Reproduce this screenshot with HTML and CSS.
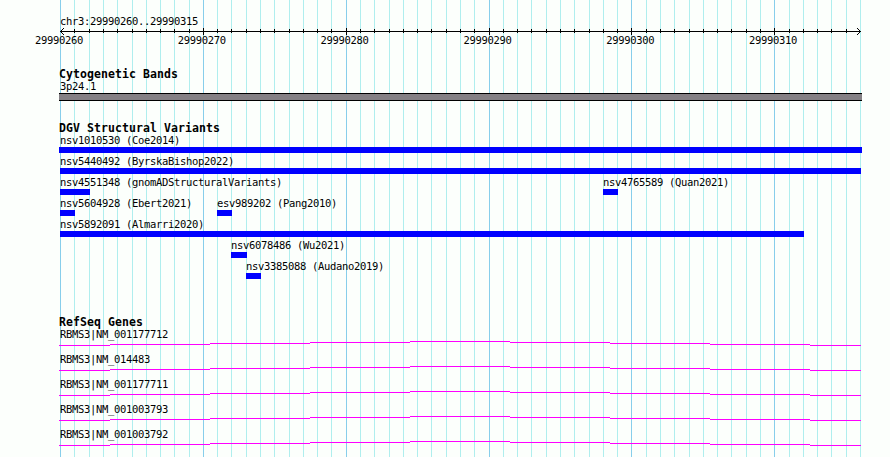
FILE: index.html
```html
<!DOCTYPE html>
<html lang="en">
<head>
    <meta charset="UTF-8">
    <meta name="viewport" content="width=device-width, initial-scale=1.0">
    <title>chr3:29990260..29990315</title>
    <link rel="stylesheet" href="styles.css">
</head>
<body>
    <div class="browser">
        <!-- Vertical grid, one line per base -->
        <svg class="grid" width="890" height="457" shape-rendering="crispEdges">
            <g id="grid-lines"></g>
        </svg>

        <!-- Ruler -->
        <div class="ruler">
            <div class="label">chr3:29990260..29990315</div>
            <svg class="axis" width="890" height="9" shape-rendering="crispEdges">
                <rect x="60" y="4" width="801" height="1"/>
                <g id="ticks"></g>
                <path d="M61 3h1v1h-1zM62 2h1v1h-1zM63 1h1v1h-1zM61 5h1v1h-1zM62 6h1v1h-1zM63 7h1v1h-1z"/>
                <path d="M859 3h1v1h-1zM858 2h1v1h-1zM857 1h1v1h-1zM859 5h1v1h-1zM858 6h1v1h-1zM857 7h1v1h-1z"/>
            </svg>
            <div class="positions">
                <span>29990260</span>
                <span>29990270</span>
                <span>29990280</span>
                <span>29990290</span>
                <span>29990300</span>
                <span>29990310</span>
            </div>
        </div>

        <!-- Cytogenetic bands -->
        <div class="track cyto">
            <h2>Cytogenetic Bands</h2>
            <div class="label">3p24.1</div>
            <div class="band"></div>
        </div>

        <!-- Structural variants -->
        <div class="track variants">
            <h2>DGV Structural Variants</h2>
            <div class="row">
                <div class="feature first"><div class="label">nsv1010530 (Coe2014)</div><div class="bar full" style="width: 803px"></div></div>
            </div>
            <div class="row">
                <div class="feature first"><div class="label">nsv5440492 (ByrskaBishop2022)</div><div class="bar" style="width: 801px"></div></div>
            </div>
            <div class="row">
                <div class="feature first"><div class="label">nsv4551348 (gnomADStructuralVariants)</div><div class="bar" style="width: 30px"></div></div>
                <div class="feature" style="margin-left: 543px"><div class="label">nsv4765589 (Quan2021)</div><div class="bar" style="width: 15px"></div></div>
            </div>
            <div class="row">
                <div class="feature first"><div class="label">nsv5604928 (Ebert2021)</div><div class="bar" style="width: 15px"></div></div>
                <div class="feature" style="margin-left: 157px"><div class="label">esv989202 (Pang2010)</div><div class="bar" style="width: 15px"></div></div>
            </div>
            <div class="row">
                <div class="feature first"><div class="label">nsv5892091 (Almarri2020)</div><div class="bar" style="width: 744px"></div></div>
            </div>
            <div class="row">
                <div class="feature" style="margin-left: 171px"><div class="label">nsv6078486 (Wu2021)</div><div class="bar" style="width: 16px"></div></div>
            </div>
            <div class="row">
                <div class="feature" style="margin-left: 186px"><div class="label">nsv3385088 (Audano2019)</div><div class="bar" style="width: 15px"></div></div>
            </div>
        </div>

        <!-- Genes -->
        <div class="track genes">
            <h2>RefSeq Genes</h2>
            <div class="gene">
                <div class="label">RBMS3|NM_001177712</div>
                <svg class="intron" width="802" height="5" shape-rendering="crispEdges">
                    <path id="intron" d="M0 4H51V5H0zM51 3H151V4H51zM151 2H251V3H151zM251 1H351V2H251zM351 0H451V1H351zM451 1H551V2H451zM551 2H651V3H551zM651 3H751V4H651zM751 4H802V5H751z"/>
                </svg>
            </div>
            <div class="gene">
                <div class="label">RBMS3|NM_014483</div>
                <svg class="intron" width="802" height="5" shape-rendering="crispEdges"><use href="#intron"/></svg>
            </div>
            <div class="gene">
                <div class="label">RBMS3|NM_001177711</div>
                <svg class="intron" width="802" height="5" shape-rendering="crispEdges"><use href="#intron"/></svg>
            </div>
            <div class="gene">
                <div class="label">RBMS3|NM_001003793</div>
                <svg class="intron" width="802" height="5" shape-rendering="crispEdges"><use href="#intron"/></svg>
            </div>
            <div class="gene">
                <div class="label">RBMS3|NM_001003792</div>
                <svg class="intron" width="802" height="5" shape-rendering="crispEdges"><use href="#intron"/></svg>
            </div>
        </div>
    </div>

    <script>
        const bases = [
            60, 74, 89, 103, 117, 132, 146, 160, 174, 189,
            203, 217, 231, 246, 260, 274, 289, 303, 317, 331,
            346, 360, 374, 389, 403, 417, 431, 446, 460, 474,
            489, 503, 517, 531, 546, 560, 574, 589, 603, 617,
            631, 646, 660, 674, 689, 703, 717, 731, 746, 760,
            774, 789, 803, 817, 831, 846, 860
        ];

        function addLine(parent, x, y, height, className) {
            const rect = document.createElementNS("http://www.w3.org/2000/svg", "rect");
            rect.setAttribute("x", x);
            rect.setAttribute("y", y);
            rect.setAttribute("width", 1);
            rect.setAttribute("height", height);
            rect.setAttribute("class", className);
            parent.appendChild(rect);
        }

        const grid = document.getElementById("grid-lines");
        const ticks = document.getElementById("ticks");

        bases.forEach((x, i) => {
            const major = i % 10 === 0;
            addLine(grid, x, 0, 457, major ? "major" : "minor");

            // No ticks under the arrow heads
            if (i > 0 && i < bases.length - 1) {
                addLine(ticks, x, major ? 1 : 2, major ? 7 : 4, "tick");
            }
        });
    </script>
</body>
</html>
```
FILE: styles.css
```css
body {
    margin: 0;
    background-color: #fcfffc;
    color: #000;
    font-family: "DejaVu Sans Mono", monospace;
}

.browser {
    position: relative;
    width: 890px;
    height: 457px;
    overflow: hidden;
}

.grid {
    position: absolute;
    top: 0;
    left: 0;
    z-index: -1;
}

.minor {
    fill: #afeeee;
}

.major {
    fill: #87ceeb;
}

.label,
.positions {
    height: 12px;
    font-size: 10.5px;
    line-height: 12px;
    letter-spacing: -0.32px;
    white-space: nowrap;
}

h2 {
    margin: 0 0 0 -1px;
    height: 12px;
    font-size: 11.5px;
    line-height: 12px;
    letter-spacing: 0.08px;
    font-weight: bold;
    white-space: nowrap;
}

/* Ruler */
.ruler {
    height: 68px;
    padding-top: 15px;
    box-sizing: border-box;
}

.ruler .label {
    padding-left: 60px;
}

.axis {
    display: block;
}

.positions {
    display: grid;
    grid-template-columns: repeat(6, 142.8px);
    padding-left: 35px;
    margin-top: -2px;
}

/* Tracks */
.track {
    padding-left: 60px;
}

.cyto {
    height: 54px;
}

.cyto .label {
    height: 13px;
}

.band {
    width: 803px;
    height: 8px;
    margin-left: -1px;
    box-sizing: border-box;
    background-color: #848084;
    border-top: 1px solid #000;
    border-bottom: 1px solid #000;
}

.variants {
    height: 194px;
}

.variants h2 {
    height: 13px;
}

.variants .label,
.genes .label {
    line-height: 10px;
}

.row {
    display: grid;
    height: 21px;
}

.feature {
    grid-area: 1 / 1;
}

.bar {
    height: 6px;
    background-color: #0000ff;
}

.full {
    margin-left: -1px;
}

.genes h2 {
    height: 13px;
}

.gene {
    height: 25px;
}

.intron {
    display: block;
    margin-left: -1px;
}

#intron {
    fill: #ff00ff;
}
```
